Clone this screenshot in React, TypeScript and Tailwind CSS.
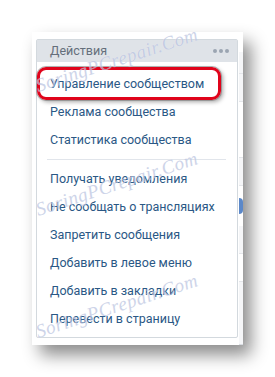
const items = [
  'Управление сообществом',
  'Реклама сообщества',
  'Статистика сообщества',
  null,
  'Получать уведомления',
  'Не сообщать о трансляциях',
  'Запретить сообщения',
  'Добавить в левое меню',
  'Добавить в закладки',
  'Перевести в страницу',
];

const Watermark = ({ top }: { top: number }) => (
  <div
    className="absolute left-[22px] w-[190px] text-center -rotate-[18deg] italic text-[19px] tracking-[0.5px] text-[#b9c3e0] opacity-70 pointer-events-none"
    style={{ top, fontFamily: '"Liberation Serif", "DejaVu Serif", serif', textShadow: '0 0 1px #fff' }}
  >
    SoringPCrepair.Com
  </div>
);

export default function App() {
  return (
    <div className="relative w-[275px] h-[377px] bg-white overflow-hidden" style={{ fontFamily: 'Roboto, "Open Sans", sans-serif' }}>
      <div className="relative ml-[32px] mt-[32px] w-[211px] h-[313px] bg-white flex shadow-[8px_10px_16px_rgba(0,0,0,0.45)]">
        <div className="ml-[4px] mt-[7px] w-[202px] h-[299px] border border-[#d3d9de] rounded-[2px] bg-white flex flex-col">
          <div className="h-[24px] bg-[#dfe3e8] flex items-center justify-between pl-[13px] pr-[8px]">
            <span className="text-[12.5px] text-[#656f7b]">Действия</span>
            <div className="flex gap-[2px]">
              <span className="w-[4px] h-[4px] rounded-full bg-[#9ba5b1]" />
              <span className="w-[4px] h-[4px] rounded-full bg-[#9ba5b1]" />
              <span className="w-[4px] h-[4px] rounded-full bg-[#9ba5b1]" />
            </div>
          </div>
          <div className="pt-[8px] pb-[4px] flex flex-col">
            {items.map((t, i) =>
              t === null ? (
                <div key={i} className="my-[5px] ml-[10px] mr-[11px] h-px bg-[#e1e5eb]" />
              ) : (
                <div key={i} className="h-[28px] flex items-center pl-[13px] text-[12.5px] text-[#2a5885] whitespace-nowrap">
                  {t}
                </div>
              )
            )}
          </div>
        </div>
        <div className="flex-1 ml-[1px] bg-[#f5f6f8] flex flex-col">
          <div className="h-[20px] bg-white" />
          <div className="h-[22px] border-b border-[#e4e6ea]" />
          <div className="h-[28px] border-b border-[#e4e6ea]" />
          <div className="h-[56px] border-b border-[#e4e6ea] bg-white" />
          <div className="h-[28px] border-b border-[#e4e6ea]" />
          <div className="h-[40px] bg-white flex items-center">
            <span className="w-[4px] h-[16px] bg-[#5b88c9] rounded-r-full" />
          </div>
          <div className="h-[28px] border-b border-[#e4e6ea]" />
          <div className="h-[28px] border-b border-[#e4e6ea] bg-white" />
          <div className="flex-1 border-b border-[#d8dce2]" />
        </div>
      </div>
      <div className="absolute left-[37px] top-[67px] w-[184px] h-[33px] rounded-[9px] border-[3px] border-[#e0041b] shadow-[0_0_0_1px_rgba(120,120,120,0.55),2px_2px_4px_rgba(0,0,0,0.35)]" />
      <Watermark top={46} />
      <Watermark top={170} />
      <Watermark top={292} />
    </div>
  );
}
